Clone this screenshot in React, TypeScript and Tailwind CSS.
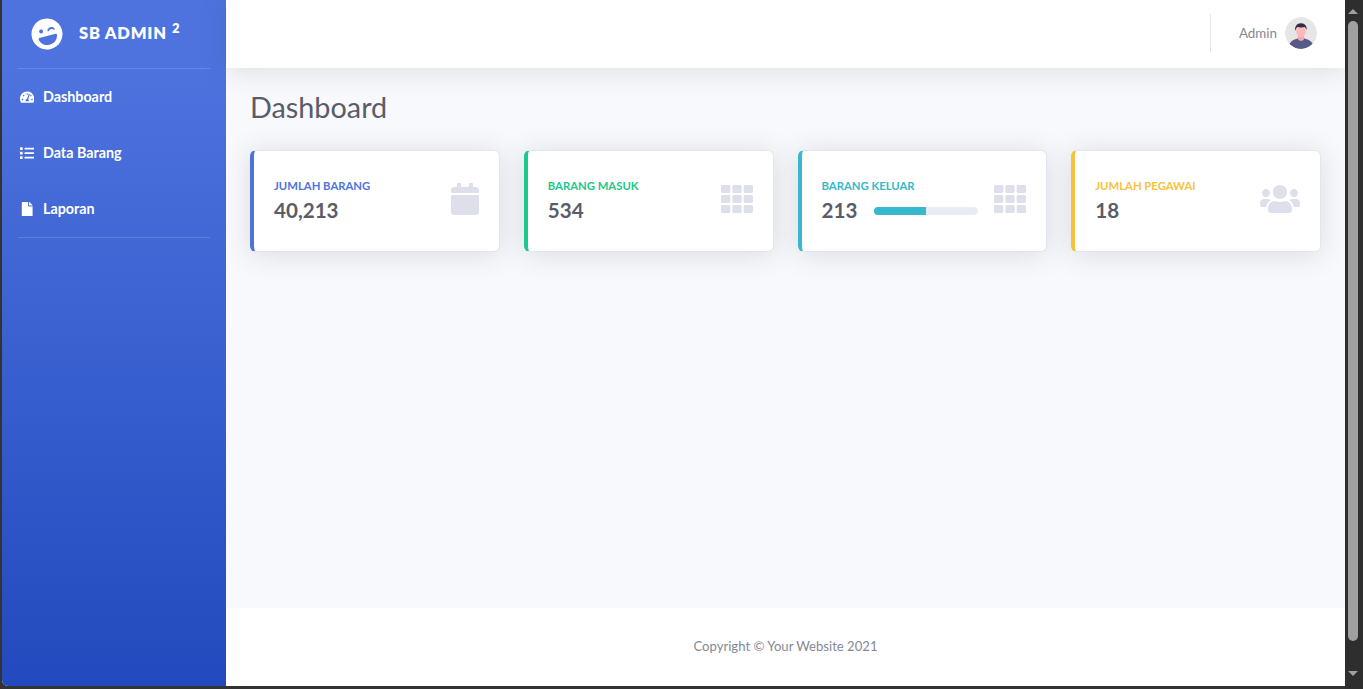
import React from "react";
import { FaCalendar, FaFile, FaLaughWink, FaList, FaTachometerAlt, FaTh, FaUsers } from "react-icons/fa";

const nav = [
  { label: "Dashboard", Icon: FaTachometerAlt },
  { label: "Data Barang", Icon: FaList },
  { label: "Laporan", Icon: FaFile },
];

function Card({ label, value, border, text, icon, bar }: { label: string; value: string; border: string; text: string; icon: React.ReactNode; bar?: boolean }) {
  return (
    <div className={`h-[102px] rounded-[6px] border border-[#e3e6f0] border-l-4 ${border} bg-white pl-5 pr-5 flex items-center shadow-[0_2.4px_28px_0_rgba(58,59,69,0.15)]`}>
      <div className="flex-1 min-w-0">
        <div className={`text-[11.3px] leading-[13.5px] font-bold uppercase mb-[6px] -mt-[1px] ${text}`}>{label}</div>
        <div className="flex items-center">
          <div className="text-[20.6px] leading-[24px] font-bold text-[#5a5c69]">{value}</div>
          {bar && (
            <div className="ml-[17px] mr-4 mt-[2px] flex-1 h-2 rounded-[4px] bg-[#eaecf4] overflow-hidden">
              <div className="h-full w-1/2 bg-[#36b9cc]" />
            </div>
          )}
        </div>
      </div>
      <div className="shrink-0 pb-1 text-[#dddfeb]">{icon}</div>
    </div>
  );
}

function Avatar() {
  return (
    <svg viewBox="0 0 32 32" className="w-8 h-8 rounded-full">
      <circle cx="16" cy="16" r="16" fill="#e6e6e6" />
      <path d="M4.5 27c1.500-3.500 5-4.600 8-5.600l1.500-.6h4l1.600.6c3 1 6.500 2.100 8 5.400A16 16 0 0 1 16 32 16 16 0 0 1 4.500 27z" fill="#575a89" />
      <path d="M13 18h6v4.200c-.8 1-1.800 1.500-3 1.500s-2.300-.5-3-1.500z" fill="#f7a9a9" />
      <ellipse cx="16" cy="14.500" rx="4.700" ry="5.800" fill="#ffb8b8" />
      <path d="M10.200 13.800c-.6-3.800 1.200-7.300 5.300-7.500 4.400-.3 6.600 2.600 6.200 7.200-.5-1.600-1.100-2.600-2-3.400-1.900.4-5 .5-7.400-.1-.9 1-1.600 2.200-2.100 3.800z" fill="#2f2e41" />
    </svg>
  );
}

export default function App() {
  return (
    <div className="h-[689px] w-[1363px] overflow-hidden flex bg-[#333333] pl-[2px] [font-family:'Lato','Liberation_Sans',sans-serif]">
      <div className="flex-1 min-w-0 h-[686px] flex rounded-bl-[6px] overflow-hidden bg-[#f8f9fc]">
        <aside className="w-[224px] shrink-0 bg-[linear-gradient(180deg,#4e73df_10%,#224abe_100%)] text-white">
          <div className="h-[68px] pl-[29px] flex items-center">
            <FaLaughWink className="text-[32px] -rotate-[15deg]" />
            <div className="ml-4 mb-[2px] text-[16.5px] font-extrabold tracking-[0.8px] flex items-start">
              SB ADMIN
              <span className="text-[13px] ml-[5px] mt-[1px] leading-none font-extrabold">2</span>
            </div>
          </div>
          <div className="mx-4 h-px bg-white/15" />
          {nav.map(({ label, Icon }) => (
            <div key={label} className="h-[56px] flex items-center pl-[16px] text-[14.3px] font-bold">
              <span className="w-[18px] mr-[7px] shrink-0 flex justify-center"><Icon className="h-[14.4px] w-auto" /></span>
              {label}
            </div>
          ))}
          <div className="mx-4 h-px bg-white/15" />
        </aside>
        <div className="flex-1 min-w-0 flex flex-col">
          <header className="relative h-[68px] shrink-0 bg-white flex items-center justify-end pr-[28px] pb-[2px] shadow-[0_2.4px_28px_0_rgba(58,59,69,0.15)]">
            <div className="w-px h-[38px] bg-[#e3e6f0] mr-[28px]" />
            <span className="text-[13.4px] text-[#858796] mr-2">Admin</span>
            <Avatar />
          </header>
          <main className="flex-1 px-6 pt-[22px]">
            <h1 className="text-[28.8px] leading-[34px] font-normal text-[#5a5c69] mb-[26px]">Dashboard</h1>
            <div className="grid grid-cols-4 gap-6">
              <Card label="Jumlah Barang" value="40,213" border="border-l-[#4e73df]" text="text-[#4e73df]" icon={<FaCalendar className="w-[28px] h-[32px]" />} />
              <Card label="Barang Masuk" value="534" border="border-l-[#1cc88a]" text="text-[#1cc88a]" icon={<FaTh className="w-[32px] h-[32px]" />} />
              <Card label="Barang Keluar" value="213" border="border-l-[#36b9cc]" text="text-[#36b9cc]" icon={<FaTh className="w-[32px] h-[32px]" />} bar />
              <Card label="Jumlah Pegawai" value="18" border="border-l-[#f6c23e]" text="text-[#f6c23e]" icon={<FaUsers className="w-[40px] h-[32px]" />} />
            </div>
          </main>
          <footer className="h-[78px] shrink-0 bg-white flex items-center justify-center text-[13.1px] text-[#858796]">
            Copyright © Your Website 2021
          </footer>
        </div>
      </div>
      <div className="w-[18px] shrink-0 h-[689px] bg-[#2e2e2e] flex flex-col items-center pr-[2px] pt-[9px]">
        <div className="w-0 h-0 border-x-[5px] border-x-transparent border-b-[5px] border-b-[#a0a0a0]" />
        <div className="mt-[7px] w-[10px] h-[620px] rounded-full bg-[#a0a0a0]" />
        <div className="mt-[30px] w-0 h-0 border-x-[5px] border-x-transparent border-t-[5px] border-t-[#a0a0a0]" />
      </div>
    </div>
  );
}
